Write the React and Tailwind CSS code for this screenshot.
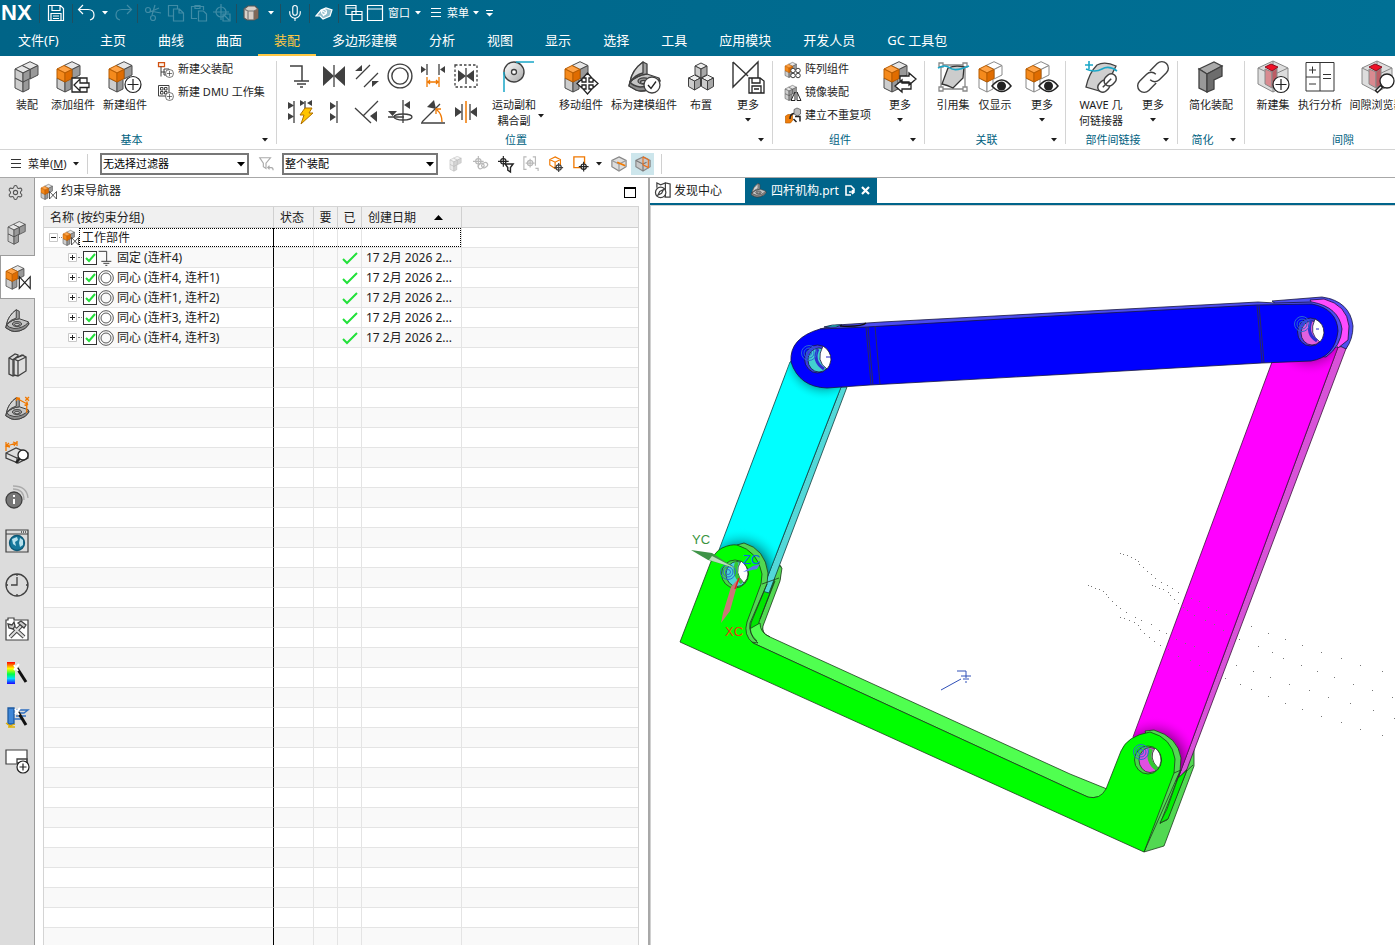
import React, { useState } from 'react';
import { Mic, Settings } from 'lucide-react';

const menuTabs = ['主页', '曲线', '曲面', '装配', '多边形建模', '分析', '视图', '显示', '选择', '工具', '应用模块', '开发人员', 'GC 工具包'];

const constraints = [
  { name: '固定 (连杆4)', fixed: true },
  { name: '同心 (连杆4, 连杆1)' },
  { name: '同心 (连杆1, 连杆2)' },
  { name: '同心 (连杆3, 连杆2)' },
  { name: '同心 (连杆4, 连杆3)' },
];

const cloudPoints = [
  [1120, 552], [1123, 553], [1127, 554], [1131, 556], [1135, 558], [1138, 560], [1139, 563], [1143, 566], [1147, 570], [1151, 573],
  [1155, 577], [1161, 581], [1167, 584], [1172, 587], [1178, 591], [1191, 597], [1199, 600], [1208, 606], [1216, 609], [1226, 613],
  [1088, 584], [1091, 585], [1095, 587], [1099, 588], [1103, 590], [1106, 593], [1108, 596], [1112, 600], [1116, 604], [1120, 607],
  [1126, 611], [1135, 616], [1141, 619], [1151, 623], [1159, 629], [1166, 632], [1176, 638], [1185, 642], [1194, 645], [1208, 651],
  [1152, 584], [1155, 585], [1159, 587], [1163, 588], [1168, 591], [1170, 594], [1174, 598], [1178, 602], [1183, 606], [1187, 609],
  [1194, 614], [1205, 619], [1214, 623], [1223, 629], [1239, 638], [1258, 645], [1272, 651], [1283, 657], [1301, 664], [1317, 670],
  [1120, 616], [1124, 617], [1129, 619], [1134, 621], [1138, 624], [1140, 628], [1144, 632], [1149, 636], [1154, 640], [1160, 644],
  [1168, 648], [1178, 655], [1190, 659], [1199, 664], [1207, 670], [1225, 677], [1240, 683], [1251, 688], [1268, 695], [1285, 702],
  [1251, 625], [1268, 632], [1285, 638], [1302, 644], [1321, 651], [1341, 657], [1360, 664], [1382, 670], [1236, 664], [1253, 670],
  [1270, 676], [1289, 683], [1309, 689], [1328, 696], [1350, 702], [1373, 709], [1392, 696], [1353, 683], [1334, 676], [1302, 708],
  [1321, 715], [1341, 721], [1360, 728], [1382, 734], [1394, 717], [1372, 689],
];

/* ---------- icons ---------- */

const Svg = ({ size = 32, box = 32, className = '', children }) => (
  <svg width={size} height={size} viewBox={`0 0 ${box} ${box}`} fill="none" stroke="#404040" strokeWidth="1.3" className={`shrink-0 overflow-visible ${className}`} aria-hidden="true">
    {children}
  </svg>
);

const Blocks = ({ hot, ghost, dim }) => {
  const t = ghost ? '#fff' : '#e6e6e6';
  const l = ghost ? '#fff' : '#cdcdcd';
  const r = ghost ? '#fff' : '#999';
  return (
    <g strokeWidth="1" stroke={ghost ? '#888' : '#4a4a4a'} strokeLinejoin="round" opacity={dim ? 0.4 : 1} transform={hot ? 'translate(-4 0)' : undefined}>
      <path d="M11 4.500 19 .7 27 4.500 19 8.500Z" fill={t} />
      <path d="M19 8.500 27 4.500V14L19 18Z" fill={r} />
      <path d="M4 17 12 21V31L4 27Z" fill={l} />
      <path d="M12 21 18 17V28L12 31Z" fill={r} />
      <path d="M4 8 11 4.500 19 8.500 12 12Z" fill={hot ? '#ffa347' : t} stroke={hot ? '#b85c00' : undefined} />
      <path d="M4 8 12 12V21L4 17Z" fill={hot ? '#f58a1c' : l} stroke={hot ? '#b85c00' : undefined} />
      <path d="M12 12 19 8.500V17.500L12 21Z" fill={hot ? '#e06c00' : r} stroke={hot ? '#b85c00' : undefined} />
    </g>
  );
};

const PlusBadge = ({ x = 24, y = 23.5, r = 8 }) => (
  <g stroke="#222" strokeWidth="1.2">
    <circle cx={x} cy={y} r={r} fill="#fff" />
    <path d={`M${x - r + 2.5} ${y}h${2 * r - 5}M${x} ${y - r + 2.5}v${2 * r - 5}`} />
  </g>
);

const Bowtie = ({ x = 17, y = 15, w = 14, h = 15 }) => (
  <path d={`M${x} ${y}v${h}l${w} ${-h}v${h}Z`} fill="#fff" stroke="#222" strokeWidth="1.5" />
);

const Bracket = ({ children, size }) => (
  <Svg size={size}>
    <g strokeLinejoin="round">
      <path d="M2 21Q9 14 19 13L31 17 32 20Q28 27 20 29 12 31 8 29L1 25Z" fill="#c4c4c4" />
      <path d="M1 25 2 21Q5 25 12 26 24 26 31 18L32 20Q28 27 20 29 12 31 8 29Z" fill="#8c8c8c" />
      <path d="M2 21Q4 9 15 1L19 3V13Q9 14 2 21Z" fill="#a0a0a0" />
      <path d="M2 21Q4 9 15 1V12Q7 14 2 21Z" fill="#d4d4d4" />
      <ellipse cx="16" cy="20" rx="6" ry="3.200" fill="#9a9a9a" />
      <ellipse cx="16" cy="21" rx="3.500" ry="1.500" fill="#eee" />
    </g>
    {children}
  </Svg>
);

const AssemblyIcon = ({ size }) => <Svg size={size}><Blocks /></Svg>;
const ConstraintNavIcon = ({ size }) => <Svg size={size}><Blocks hot /><Bowtie /></Svg>;
const AddIcon = () => (
  <Svg>
    <Blocks hot />
    <path d="M15 17H30V31H15Z" fill="#fff" stroke="#222" />
    <path d="M32 22H23V18L17 24 23 30V26.500H32Z" fill="#fff" stroke="#222" />
  </Svg>
);
const NewIcon = () => <Svg><Blocks hot /><PlusBadge /></Svg>;
const MoveIcon = () => (
  <Svg>
    <Blocks hot />
    <path d="M22.500 12l4.500 5h-3v4h4v-3l5 4.500-5 4.500v-3h-4v4h3l-4.500 5-4.500-5h3v-4h-4v3l-5-4.500 5-4.500v3h4v-4h-3Z" fill="#fff" stroke="#222" />
  </Svg>
);
const SwapIcon = () => (
  <Svg>
    <Blocks hot />
    <path d="M16 15h9v-3l7 6-7 6v-3h-9ZM27 22h-9v-3l-7 6 7 6v-3h9Z" fill="#fff" stroke="#222" />
  </Svg>
);
const EyeIcon = () => (
  <Svg>
    <Blocks hot ghost />
    <path d="M13 25Q23 13 32 25 23 36 13 25Z" fill="#fff" stroke="#222" strokeWidth="1.5" />
    <circle cx="22.500" cy="25" r="4.500" fill="#222" stroke="none" />
  </Svg>
);
const MarkIcon = () => (
  <Bracket>
    <circle cx="24" cy="24" r="8" fill="#fff" />
    <path d="M20 24l3 3.500 5-7" stroke="#222" />
  </Bracket>
);
const ArrangeIcon = () => (
  <Svg>
    {[[16, 2], [9.5, 14], [22.5, 14]].map(([x, y]) => (
      <g key={x} strokeWidth="1" strokeLinejoin="round">
        <path d={`M${x} ${y}l6 3-6 3-6-3Z`} fill="#eee" />
        <path d={`M${x - 6} ${y + 3}l6 3v9l-6-3.500Z`} fill="#ccc" />
        <path d={`M${x + 6} ${y + 3}l-6 3v9l6-3.500Z`} fill="#a8a8a8" />
      </g>
    ))}
  </Svg>
);
const SaveBowIcon = () => (
  <Svg>
    <path d="M1 1v25L26 1v16M1 1l15 14" stroke="#333" strokeWidth="1.4" />
    <path d="M17 17h11l4 3v12H17Z" fill="#fff" stroke="#222" />
    <path d="M20 17v5h8v-5M20 32v-7h9v7M22 28h5" stroke="#222" />
  </Svg>
);
const JointIcon = () => (
  <Svg>
    <defs><linearGradient id="wheel" x1="0" y1="0" x2="1" y2="1"><stop offset="0" stopColor="#fff" /><stop offset="1" stopColor="#a8a8a8" /></linearGradient></defs>
    <circle cx="16" cy="11" r="10" fill="url(#wheel)" strokeWidth="1.4" />
    <circle cx="16" cy="11" r="2.500" fill="#fff" />
    <path d="M18 1h18M6 11v20" stroke="#1aa7c8" strokeWidth="1.5" />
  </Svg>
);
const RefSetIcon = () => (
  <Svg>
    <path d="M4 4H28V28H4Z" stroke="#888" />
    <path d="M2 2h4v4H2ZM26 2h4v4h-4ZM2 26h4v4H2ZM26 26h4v4h-4Z" stroke="#888" fill="#fff" />
    <path d="M11 7Q18 4 27 6L26 17 16 27Q10 24 5 23 8 15 11 7Z" fill="#ccc" stroke="#333" />
    <path d="M1 7Q8 3 13 7T32 5" stroke="#1aa7c8" strokeWidth="1.6" />
  </Svg>
);
const WaveIcon = () => (
  <Svg>
    <path d="M12 4Q20 0 31 5L18 31 1 26Q4 12 12 4Z" fill="#cfcfcf" />
    <path d="M1 8Q10 12 17 8T32 10M4 0v8M0 4h8" stroke="#1aa7c8" strokeWidth="1.6" />
    <g transform="rotate(-45 22 22)" fill="#fff" strokeWidth="1.5"><rect x="11" y="17" width="13" height="10" rx="5" /><rect x="20" y="17" width="13" height="10" rx="5" /><path d="M16 22h12" /></g>
  </Svg>
);
const ChainIcon = () => (
  <Svg>
    <g transform="rotate(-45 16 16)" strokeWidth="1.4">
      <path d="M14 22.500H3.500a6.500 6.500 0 0 1 0-13H13.500a6.500 6.500 0 0 1 6.500 6.500" />
      <path d="M18 9.500H28.500a6.500 6.500 0 0 1 0 13H18.500a6.500 6.500 0 0 1-6.500-6.500" />
    </g>
  </Svg>
);
const SimplifyIcon = () => (
  <Svg>
    <path d="M4 8 19 1 27 5 12 13Z" fill="#aaa" />
    <path d="M4 8 12 13V31L4 27Z" fill="#999" />
    <path d="M12 13 27 5V15L19 19V28L12 31Z" fill="#6d6d6d" />
  </Svg>
);
const ClearanceCube = () => (
  <g strokeWidth="1" stroke="#888" strokeLinejoin="round">
    <path d="M16 0 31 7V23L16 31 1 23V7Z" fill="#ddd" />
    <path d="M16 14V31M1 7l15 7 15-7M16 0v12" />
    <path d="M8 8 15 11V27L8 23Z" fill="#d98a90" />
    <path d="M15 11 20 7V24L15 27Z" fill="#bd5c64" />
    <path d="M8 6 14 3 21 6 15 10Z" fill="#f01228" stroke="#8a1020" />
  </g>
);
const NewSetIcon = () => <Svg><ClearanceCube /><PlusBadge /></Svg>;
const AnalyzeIcon = () => (
  <Svg>
    <path d="M2 1.500H30V30H2ZM16 1.500V30M2 16H16M5 9h7M8.500 5.500v7M5 23h7M19 13.500h8M19 17.500h8" stroke="#333" strokeWidth="1" />
  </Svg>
);
const BrowseIcon = () => (
  <Svg>
    <ClearanceCube />
    <path d="M21 25l-6 6" stroke="#222" strokeWidth="4" />
    <path d="M20 26l-4 4" stroke="#fff" strokeWidth="1.500" />
    <circle cx="26" cy="20" r="7" fill="#fff" stroke="#222" />
  </Svg>
);

const Concentric = ({ size = 16 }) => (
  <Svg size={size} box={24}><circle cx="12" cy="12" r="11" /><circle cx="12" cy="12" r="7.500" /></Svg>
);
const Ground = ({ size = 16 }) => (
  <Svg size={size} box={24}><path d="M1 2h12v15M5 17h15M8 20h9M11 23h3" strokeWidth="1.5" /></Svg>
);

const constraintTools = [
  ['固定', <Ground key="i" size={24} />],
  ['接触', <Svg key="i" size={24} box={24}><path d="M1 2v20l11-10zM23 2v20L12 12z" fill="#404040" stroke="none" /><path d="M12 1v22" /></Svg>],
  ['平行', <Svg key="i" size={24} box={24}><path d="M1 15 15 1M9 23 23 9" /><path d="M0 7 7 1v6zM17 17h7l-7 6z" fill="#404040" stroke="none" /></Svg>],
  ['同心', <Concentric key="i" size={26} />],
  ['距离', <Svg key="i" size={24} box={24}><path d="M6 0v11M18 0v11" /><path d="M0 2v7l5-3.500zM24 2v7l-5-3.500z" fill="#404040" stroke="none" /><path d="M6 13v10M18 13v10M7 18h10M9 16l-2 2 2 2M15 16l2 2-2 2" stroke="#f07800" /></Svg>],
  ['胶合', <Svg key="i" size={24} box={24}><path d="M1 1h22v22H1z" strokeDasharray="2.500 2" /><path d="M4 6v12l8-6zM20 6v12l-8-6z" fill="#404040" stroke="none" /><path d="M12 4v16" /></Svg>],
  ['自动约束', <Svg key="i" size={26} box={26}><path d="M6 2v22M17 2v9" /><path d="M0 3v7l6-3.500zM0 14v7l6-3.500zM12 1v6l5-3zM24 1v6l-5-3z" fill="#404040" stroke="none" /><path d="M17 9h7l-3 5h4L13 25l3-9h-4z" fill="#ffc400" stroke="#b07000" strokeWidth="1" /></Svg>],
  ['对齐', <Svg key="i" size={24} box={24}><path d="M15 1v22" /><path d="M8 2v8l6-4zM8 13v8l6-4z" fill="#404040" stroke="none" /></Svg>],
  ['垂直', <Svg key="i" size={24} box={24}><path d="M23 1 8 16M0 8l16 15" /><path d="M22 11v11l-7-6z" fill="#404040" stroke="none" /></Svg>],
  ['中心', <Svg key="i" size={26} box={26}><path d="M16 1v23M1 18h16" /><ellipse cx="16" cy="18" rx="9" ry="3" /><path d="M1 12h9l-4.500 5zM23 2v8l-6-4z" fill="#404040" stroke="none" /></Svg>],
  ['角度', <Svg key="i" size={24} box={24}><path d="M0 23h24M1 22 19 4" /><path d="M6 7 13 0l2 9z" fill="#404040" stroke="none" /><path d="M21 22q0-8-5-12M15 14v-5h5" stroke="#f07800" /></Svg>],
  ['对中', <Svg key="i" size={24} box={24}><path d="M12 1v22" stroke="#f07800" strokeWidth="1.500" /><path d="M8 4v16M16 4v16" /><path d="M1 7v10l7-5zM23 7v10l-7-5z" fill="#404040" stroke="none" /></Svg>],
];

const Caret = ({ className = '' }) => (
  <svg width="6" height="4" viewBox="0 0 6 4" className={`shrink-0 ${className}`} fill="currentColor" aria-hidden="true"><path d="M0 0h6L3 3.500z" /></svg>
);

/* ---------- title bar ---------- */

const Sep = () => <span className="h-[19px] w-px bg-[#1f4f60]" />;

const QuickButton = ({ label, className = 'w-7', faded, children }) => (
  <button aria-label={label} className={`flex h-6 shrink-0 items-center justify-center ${className} ${faded ? 'opacity-25' : ''}`}>
    <svg width="18" height="18" viewBox="0 0 18 18" fill="none" stroke="#fff" strokeWidth="1.2" aria-hidden="true">{children}</svg>
  </button>
);

const TitleBar = () => (
  <div className="flex h-[26px] items-center text-[11px] text-white">
    <span className="w-[39px] pl-px font-[Liberation_Sans] text-[22px] leading-6 font-bold">NX</span>
    <Sep />
    <QuickButton label="保存" className="w-8"><path d="M1.500 1.500h12l3 3v12h-15zM5 1.500v5h8v-5M4 16.500v-7h10v7M6 12h6M6 14.500h6" /></QuickButton>
    <Sep />
    <QuickButton label="撤销" className="w-[26px]"><path d="M6 1 1.500 5.500 6 10M2 5.500h9q6 0 6 5.500 0 4-4 5" /></QuickButton>
    <Caret className="mx-[3px]" />
    <QuickButton label="重做" className="w-[26px]" faded><path d="M12 1l4.500 4.500L12 10M16 5.500H7q-6 0-6 5.500 0 4 4 5" /></QuickButton>
    <Sep />
    <div className="flex px-[3px]">
      <QuickButton label="剪切" className="w-[23px]" faded><circle cx="4" cy="6" r="2.500" /><circle cx="9" cy="14" r="2.500" /><path d="M6 7l11 2M8 11 11 1M6 8l9-4" /></QuickButton>
      <QuickButton label="复制" className="w-[23px]" faded><path d="M6 12H1.500V1.500h9V5M6.500 5h6l4 4v8h-10zM12 5v4h4" /></QuickButton>
      <QuickButton label="粘贴" className="w-[23px]" faded><path d="M7 14.500H1.500v-12h12V6M5 1.500h5v3H5zM8.500 7h5l3 3v7h-8z" /></QuickButton>
      <QuickButton label="定位" className="w-[23px]" faded><circle cx="8" cy="8" r="5" /><path d="M8 0v16M0 8h16M10 10h7v7h-7zM11 11l5 5" /></QuickButton>
    </div>
    <Sep />
    <QuickButton label="实体"><path d="M2 5 6 2h7l3 3v9l-4 2H5l-3-2z" fill="#d8d0c8" stroke="#555" /><path d="M2 5l4 2h6l4-2M6 7v9M12 7v9" stroke="#777" /><path d="M12 7l4-2v9l-4 2z" fill="#806858" stroke="none" /></QuickButton>
    <Caret className="mx-[3px]" />
    <span className="w-[3px]" />
    <Sep />
    <button aria-label="语音" className="flex w-7 justify-center"><Mic size={18} strokeWidth={1.5} /></button>
    <Sep />
    <QuickButton label="触控"><path d="M1 12 6 6l5-2 6 2-2 6-7 3-3-3zM6 6l5 3-3 3" fill="#ffffff90" /><circle cx="9" cy="8" r="2.500" /></QuickButton>
    <Sep />
    <div className="flex items-center pl-[3px]">
      <QuickButton label="层叠窗口" className="w-[23px]"><path d="M1 1.500h10v9H1zM1 4h10M7 7.500h10v9H7zM7 10.500h10" fill="#006487" /></QuickButton>
      <button className="flex items-center gap-[3px]">
        <svg width="20" height="18" viewBox="0 0 20 18" fill="none" stroke="#fff" strokeWidth="1.2"><path d="M2.500 1.500h15v15h-15zM2.500 5h15" /></svg>
        窗口<Caret className="ml-[2px]" />
      </button>
      <button className="ml-[9px] flex items-center gap-1">
        <svg width="12" height="10" viewBox="0 0 12 10" stroke="#fff" className="mr-px"><path d="M1 .5h10M1 4.500h10M1 8.500h10" /></svg>
        菜单<Caret />
      </button>
      <button aria-label="自定义" className="ml-[7px]">
        <svg width="7" height="7" viewBox="0 0 7 7" fill="#fff"><path d="M0 0h7v1H0zM0 3h7L3.500 6.500z" /></svg>
      </button>
    </div>
  </div>
);

const MenuTabs = ({ active, onSelect }) => (
  <nav className="flex h-[30px] text-[13px] text-white">
    <button className="w-[84px] shrink-0 pl-[18px] text-left">文件(F)</button>
    {menuTabs.map((tab) => (
      <button
        key={tab}
        onClick={() => onSelect(tab)}
        className={`shrink-0 border-b-2 px-4 leading-none ${tab === active ? 'border-b-[#ffc845] text-[#ffc845]' : 'border-b-transparent'}`}
      >
        {tab}
      </button>
    ))}
  </nav>
);

/* ---------- ribbon ---------- */

const BigButton = ({ icon, lines, className, menu }) => (
  <button className={`flex shrink-0 flex-col items-center pt-[5px] leading-4 whitespace-nowrap ${className}`}>
    {icon}
    <span className="mt-1">{lines[0]}</span>
    {lines[1] && <span>{lines[1]}</span>}
    {menu && <Caret className="mt-[5px]" />}
  </button>
);

const SmallButton = ({ icon, label }) => (
  <button className="flex h-[23px] items-center gap-1 text-left whitespace-nowrap">{icon}{label}</button>
);

const RibbonGroup = ({ title, menu = true, className, children }) => (
  <section className={`my-[5px] flex shrink-0 flex-col border-r border-[#d4d4d4] ${className}`}>
    <div className="-mt-[5px] flex min-h-0 flex-1">{children}</div>
    <div className="-mb-1 flex h-4 items-center">
      <h2 className="flex-1 text-center leading-4 text-[#00627f]">{title}</h2>
      <span className="w-[17px]">{menu && <Caret className="ml-[3px]" />}</span>
    </div>
  </section>
);

const Ribbon = () => (
  <div className="flex h-[94px] shrink-0 overflow-hidden border-b border-[#d4d4d4] bg-white text-[11px]">
    <RibbonGroup title="基本" className="w-[277px] pl-1">
      <BigButton icon={<AssemblyIcon />} lines={['装配']} className="w-[46px]" />
      <BigButton icon={<AddIcon />} lines={['添加组件']} className="w-[46px]" />
      <BigButton icon={<NewIcon />} lines={['新建组件']} className="w-[58px]" />
      <div className="ml-1 flex flex-col pt-[2px]">
        <SmallButton label="新建父装配" icon={<Svg size={16}><path d="M1 1h12v8H1z" stroke="#d05010" strokeWidth="2.500" fill="#fff3e8" /><path d="M6 9v20M6 20h9M12 14h10v12H12z" strokeWidth="2" /><PlusBadge x={23} y={23} /></Svg>} />
        <SmallButton label="新建 DMU 工作集" icon={<Svg size={16}><path d="M1 1h21v21H1zM5 5h5v5H5zM13 5h5v5h-5zM5 13h5v5H5zM13 13h5v5h-5z" strokeWidth="2" /><PlusBadge x={23} y={23} /></Svg>} />
      </div>
    </RibbonGroup>

    <RibbonGroup title="位置" className="w-[496px]">
      <div className="ml-[7px] grid shrink-0 grid-cols-6 grid-rows-[36px_36px] pt-[2px]">
        {constraintTools.map(([name, icon]) => (
          <button key={name} aria-label={name} title={name} className="flex w-[33px] items-center justify-center">{icon}</button>
        ))}
      </div>
      <BigButton icon={<JointIcon />} lines={['运动副和', '耦合副']} className="ml-[6px] w-[52px]" />
      <Caret className="-ml-[2px] mt-[58px]" />
      <BigButton icon={<MoveIcon />} lines={['移动组件']} className="ml-[11px] w-[52px]" />
      <BigButton icon={<MarkIcon />} lines={['标为建模组件']} className="w-[74px]" />
      <BigButton icon={<ArrangeIcon />} lines={['布置']} className="w-10" />
      <BigButton icon={<SaveBowIcon />} lines={['更多']} menu className="ml-1 w-[46px]" />
    </RibbonGroup>

    <RibbonGroup title="组件" className="w-[152px]">
      <div className="ml-3 flex w-[92px] flex-col pt-[2px]">
        <SmallButton label="阵列组件" icon={<Svg size={16}><Blocks hot /><g fill="#fff" strokeWidth="2"><circle cx="16" cy="17" r="4.500" /><circle cx="26" cy="17" r="4.500" /><circle cx="16" cy="27" r="4.500" /><circle cx="26" cy="27" r="4.500" /></g></Svg>} />
        <SmallButton label="镜像装配" icon={<Svg size={16}><g transform="translate(-4 0)"><Blocks /></g><path d="M20 31V14l-8 17zM24 31V14l8 17z" fill="#fff" stroke="#222" strokeWidth="2" /></Svg>} />
        <SmallButton label="建立不重复项" icon={<Svg size={16}><path d="M1 16l5-3h9v12l-4 5H1z" fill="#ef7d0b" stroke="#b85c00" /><path d="M18 3l6-3 7 3v9l-6 4-7-4z" fill="#bbb" /><path d="M10 22q0-10 8-11M17 22l6 6M20 17h10v10" stroke="#222" strokeWidth="3" /></Svg>} />
      </div>
      <BigButton icon={<SwapIcon />} lines={['更多']} menu className="w-12" />
    </RibbonGroup>

    <RibbonGroup title="关联" className="w-[141px]">
      <BigButton icon={<RefSetIcon />} lines={['引用集']} className="ml-2 w-10" />
      <BigButton icon={<EyeIcon />} lines={['仅显示']} className="w-11" />
      <BigButton icon={<EyeIcon />} lines={['更多']} menu className="ml-1 w-[42px]" />
    </RibbonGroup>

    <RibbonGroup title="部件间链接" className="w-[112px]">
      <BigButton icon={<WaveIcon />} lines={['WAVE 几', '何链接器']} className="ml-2 w-[54px]" />
      <BigButton icon={<ChainIcon />} lines={['更多']} menu className="ml-1 w-[42px]" />
    </RibbonGroup>

    <RibbonGroup title="简化" className="w-[67px]">
      <BigButton icon={<SimplifyIcon />} lines={['简化装配']} className="w-full" />
    </RibbonGroup>

    <RibbonGroup title="间隙" className="w-[214px]" menu={false}>
      <BigButton icon={<NewSetIcon />} lines={['新建集']} className="ml-[6px] w-11" />
      <BigButton icon={<AnalyzeIcon />} lines={['执行分析']} className="w-[50px]" />
      <BigButton icon={<BrowseIcon />} lines={['间隙浏览器']} className="w-16" />
    </RibbonGroup>
  </div>
);

/* ---------- selection bar ---------- */

const FilterSelect = ({ label, value, className }) => (
  <div className={`grid h-[22px] items-center border-2 border-[#777] ${className}`}>
    <select aria-label={label} defaultValue={value} className="col-start-1 row-start-1 h-full w-full appearance-none bg-white px-px text-[11px] text-black">
      <option>{value}</option>
    </select>
    <svg width="8" height="5" viewBox="0 0 8 5" className="pointer-events-none col-start-1 row-start-1 mr-[2px] justify-self-end"><path d="M0 0h8L4 4.500z" /></svg>
  </div>
);

const ToolButton = ({ label, active, children }) => (
  <button aria-label={label} className={`flex h-[22px] shrink-0 items-center justify-center ${active ? 'w-[23px] bg-[#cde6ec]' : 'w-[25px]'}`}>
    <Svg size={16} box={18}>{children}</Svg>
  </button>
);

const SelectionBar = () => (
  <div className="flex h-7 shrink-0 items-center border-b border-[#a8a8a8] bg-white pt-px text-[11px]">
    <button className="ml-[11px] flex w-[76px] items-center">
      <svg width="10" height="10" viewBox="0 0 10 10" stroke="#333"><path d="M0 .5h10M0 4.500h10M0 8.500h10" /></svg>
      <span className="ml-[7px]">菜单(<u>M</u>)</span>
      <Caret className="ml-[6px]" />
    </button>
    <span className="h-5 w-px bg-[#d0d0d0]" />
    <FilterSelect label="选择过滤器" value="无选择过滤器" className="ml-3 w-[149px]" />
    <div className="mx-1 flex">
      <ToolButton label="重置过滤器"><path d="M2 2h12l-5 6v6l-3-2V8zM11 13h4q2 0 2 3M13 11l-2 2 2 2" stroke="#aaa" /></ToolButton>
    </div>
    <FilterSelect label="选择范围" value="整个装配" className="w-[156px]" />
    <div className="ml-[5px] flex items-center">
      <ToolButton label="实体"><g transform="scale(.55)"><Blocks dim /></g></ToolButton>
      <ToolButton label="链接"><g stroke="#b8b8b8"><circle cx="6" cy="6" r="3" /><path d="M6 0v12M0 6h12" /><rect x="6" y="9" width="7" height="5" rx="2.500" transform="rotate(-35 9 12)" /><rect x="10" y="8" width="7" height="5" rx="2.500" transform="rotate(-35 13 11)" /></g></ToolButton>
      <ToolButton label="点过滤"><path d="M6 0v12M0 6h12" stroke="#222" /><circle cx="6" cy="6" r="3" stroke="#222" /><path d="M8 9h9l-3 4v5l-3-2v-3z" fill="#fff" stroke="#222" strokeWidth="1.600" /></ToolButton>
      <ToolButton label="范围"><path d="M4 1H1v14h3M11 1h3v10M8 3v10M3 8h10M14 14h3v3" stroke="#b8b8b8" /><circle cx="8" cy="8" r="3" stroke="#b8b8b8" /></ToolButton>
      <ToolButton label="实体点"><path d="M8 1l6 3v6l-6 4-6-4V4zM2 4l6 3 6-3M8 7v6" stroke="#f07800" /><circle cx="12" cy="13" r="3" fill="#fff" /><path d="M12 8v10M7 13h10" /></ToolButton>
      <ToolButton label="框选点"><path d="M1 1h12v12H1z" stroke="#f07800" strokeWidth="1.500" /><circle cx="12" cy="12" r="3" fill="#fff" stroke="#222" /><path d="M12 6.500v11M6.500 12h11" stroke="#222" /></ToolButton>
      <Caret className="mx-[3px]" />
      <div className="ml-px flex">
        <ToolButton label="着色"><path d="M9 1l8 4v7l-8 5-8-5V5z" fill="#ddd" stroke="#888" /><path d="M1 5l8 4 8-4M9 9v8" stroke="#999" /><path d="M7 7l9 4" stroke="#f07800" strokeWidth="2" /></ToolButton>
        <ToolButton label="线框" active><path d="M9 1l8 4v7l-8 5-8-5V5z" fill="#c8c8c8" stroke="#888" /><path d="M1 5l8 4V17M9 9l4-2" stroke="#777" /><path d="M9 1v9M9 1l6 3v9L9 10" stroke="#e87020" /></ToolButton>
      </div>
      <span className="ml-[7px] h-5 w-px bg-[#d0d0d0]" />
    </div>
  </div>
);

/* ---------- resource bar ---------- */

const sideItems = [
  ['装配导航器', <AssemblyIcon key="i" size={24} />],
  ['约束导航器', <ConstraintNavIcon key="i" size={25} />],
  ['部件导航器', <Bracket key="i" size={24} />],
  ['重用库', <Svg key="i" size={24} box={24}><path d="M4 5 10 1l3 1v19l-5 2-4-2z" fill="#d8d8d8" /><path d="M4 5l4 2v16M8 7l5-4" /><path d="M9 6 17 2l4 2v14l-8 5-4-1z" fill="#dedede" /><path d="M9 6l4 2v15M13 8l8-4M11 5l8-3" /></Svg>],
  ['PMI 导航器', <Bracket key="i" size={24}><path d="M16 2l13 7M29 9v12M27 0l5 5M32 0l-5 5M15 5l1-4 4 1M26 11l4-1-1-4" stroke="#f07800" strokeWidth="1.800" /></Bracket>],
  ['测量', <Svg key="i" size={24} box={24}><path d="M1 12 11 7l12 5v5l-10 5L1 17zM1 12l11 5 10-4M12 17v5" fill="#ddd" /><path d="M1 1v9M12 0v5M2 5l9-3M4 2 1 5l4 1M8 1l3 1-2 3" stroke="#f07800" /><path d="M15 17l-4 5" strokeWidth="2.500" stroke="#222" /><circle cx="18" cy="14" r="5" fill="#fff" stroke="#222" /></Svg>],
  ['信息', <Svg key="i" size={24} box={24}><circle cx="9" cy="15" r="8" fill="#777" /><path d="M9 14v5M9 10v2" stroke="#fff" strokeWidth="2" /><path d="M8 4q11 0 11 11M8 1q14 0 15 12" stroke="#aaa" /></Svg>],
  ['浏览器', <Svg key="i" size={24} box={24}><path d="M1 1h22v22H1zM1 5h22" strokeWidth="1.200" /><path d="M16 3h1M18 3h1M20 3h1" /><circle cx="12" cy="14" r="7.500" fill="#17789c" stroke="#0d5876" /><path d="M7 10l5-2 1 3-3 2 1 4-3-2zM15 9l3 2v5l-3 2-1-4z" fill="#b9e2ee" stroke="none" /></Svg>],
  ['历史记录', <Svg key="i" size={24} box={24}><circle cx="12" cy="12" r="11" /><path d="M12 4v8H6M12 1v2M12 21v2M1 12h2M21 12h2" /></Svg>],
  ['加工向导', <Svg key="i" size={24} box={24}><path d="M1 23V3h2V1h6v2h14v20z" fill="#fff" strokeWidth="1.200" /><path d="M5 20 17 8M7 9l12 11" stroke="#444" strokeWidth="4" /><path d="M5 20 17 8M7 9l12 11" stroke="#ddd" strokeWidth="2" /><path d="M3 7l1 4 4 1 2-3-1-4-2 3zM13 6l3-2 5 4-2 3z" fill="#ccc" /></Svg>],
  ['角色', (
    <Svg key="i" size={24} box={24}>
      <defs><linearGradient id="rainbow" x1="0" y1="0" x2="0" y2="1"><stop offset="0" stopColor="#f00" /><stop offset=".3" stopColor="#ff0" /><stop offset=".55" stopColor="#0f4" /><stop offset=".75" stopColor="#0df" /><stop offset="1" stopColor="#20f" /></linearGradient></defs>
      <path d="M2 1h8v22H2z" fill="url(#rainbow)" stroke="none" />
      <path d="M12 7l9 14" stroke="#111" strokeWidth="3" /><path d="M9 4l4 6M14 3l-5 6" stroke="#fff" strokeWidth="2" />
    </Svg>
  )],
  ['系统可视化', <Svg key="i" size={24} box={24}><path d="M3 3h6v16H3z" fill="#3d86d8" stroke="#1e5aa0" /><path d="M9 5h14l-4 3H9M11 11h10M9 14h9" stroke="#2f6fc0" /><path d="M1 18l4 3 5-2M3 22h7" stroke="#e0b000" /><path d="M13 7l8 13" stroke="#111" strokeWidth="3" /><path d="M10 4l4 6M15 3l-5 6" stroke="#fff" strokeWidth="2" /></Svg>],
  ['新建选项板', <Svg key="i" size={24} box={24}><path d="M1 1h21v14H1z" fill="#fff" strokeWidth="1.200" /><path d="M12 14h10v-4H12z" /><PlusBadge x={18} y={18} r={6} /></Svg>],
];

const ResourceBar = () => (
  <aside className="flex w-[35px] shrink-0 flex-col border-r border-[#9c9c9c] bg-[#dcdcdc]">
    <button aria-label="设置" className="flex h-[33px] shrink-0 items-center justify-center pr-1 pb-1"><Settings size={17} strokeWidth={1.5} color="#555" /></button>
    {sideItems.map(([name, icon]) => (
      <button
        key={name}
        aria-label={name}
        title={name}
        className={`flex h-11 shrink-0 items-center justify-center ${name === '约束导航器' ? '-mr-px border border-r-0 border-[#9c9c9c] bg-white' : ''}`}
      >
        {icon}
      </button>
    ))}
  </aside>
);

/* ---------- constraint navigator ---------- */

const Tick = () => (
  <svg width="16" height="14" viewBox="0 0 16 14" fill="none" stroke="#22e03a" strokeWidth="2" className="mx-auto"><path d="M1 8l4 4L15 2" /></svg>
);

const Expander = ({ open }) => (
  <svg width="9" height="9" viewBox="0 0 9 9" fill="#fff" stroke="#c8c8c8" className="shrink-0">
    <path d="M.5 .5h8v8h-8z" /><path d={open ? 'M2 4.500h5' : 'M2 4.500h5M4.500 2v5'} stroke="#222" />
  </svg>
);

const cell = 'border-r border-b border-[#e4e4e4] p-0';

const ConstraintRow = ({ item }) => {
  const [checked, setChecked] = useState(true);
  return (
    <tr className="h-5 even:bg-[#f9f9f9]">
      <td className="border-r border-b border-r-black border-b-[#e4e4e4] p-0">
        <label className="flex items-center pl-6 leading-[19px]">
          <Expander />
          <span className="mr-px ml-px w-1 border-t border-dotted border-[#888]" />
          <span className="grid size-[14px] place-items-center border border-[#333] bg-white">
            <input type="checkbox" checked={checked} onChange={() => setChecked(!checked)} className="col-start-1 row-start-1 size-3 appearance-none" />
            {checked && <svg width="11" height="11" viewBox="0 0 11 11" fill="none" stroke="#22e03a" strokeWidth="2" className="pointer-events-none col-start-1 row-start-1"><path d="M1 6l3 3 6-7" /></svg>}
          </span>
          <span className="mr-[3px] ml-px">{item.fixed ? <Ground /> : <Concentric />}</span>
          {item.name}
        </label>
      </td>
      <td className={cell} />
      <td className={cell} />
      <td className={cell}><Tick /></td>
      <td className={`${cell} pl-1 whitespace-nowrap`}>17 2月 2026 2...</td>
      <td className="border-b border-[#e4e4e4] p-0" />
    </tr>
  );
};

const Navigator = () => (
  <section className="flex w-[613px] shrink-0 flex-col bg-white text-xs">
    <header className="flex h-[28px] shrink-0 items-center pl-[6px]">
      <ConstraintNavIcon size={16} />
      <h1 className="ml-1 -mt-[2px]">约束导航器</h1>
      <button aria-label="最大化" className="mr-3 ml-auto h-[11px] w-3 border border-t-2 border-black" />
    </header>
    <div className="mr-[9px] ml-2 min-h-0 flex-1 overflow-hidden border border-b-0 border-[#d4d4d4]">
      <table className="w-full table-fixed border-separate border-spacing-0 text-left leading-[19px] text-[#1c1c1c]">
        <colgroup>
          <col className="w-[230px]" /><col className="w-10" /><col className="w-6" /><col className="w-6" /><col className="w-[100px]" /><col />
        </colgroup>
        <thead>
          <tr className="h-[21px] bg-[#f0f0f0] *:border-r *:border-b *:border-[#d0d0d0] *:p-0 *:font-normal">
            <th className="pl-[6px]!">名称 (按约束分组)</th>
            <th className="pl-[6px]!">状态</th>
            <th className="text-center">要</th>
            <th className="text-center">已</th>
            <th className="pl-[6px]!">
              <span className="flex items-center gap-[18px]">
                创建日期
                <svg width="9" height="5" viewBox="0 0 9 5"><path d="M0 5h9L4.500 0z" /></svg>
              </span>
            </th>
            <th className="border-r-0!" />
          </tr>
        </thead>
        <tbody>
          <tr className="h-5">
            <td className="border-r border-b border-r-black border-b-[#e4e4e4] p-0">
              <div className="flex items-center pl-[5px]">
                <Expander open />
                <span className="mx-px w-[3px] border-t border-dotted border-[#888]" />
                <ConstraintNavIcon size={16} />
                <span className="h-[19px] flex-1 border border-r-0 border-dotted border-black pl-[2px] leading-[17px]">工作部件</span>
              </div>
            </td>
            {[1, 2, 3].map((n) => (
              <td key={n} className={cell}><div className="h-[19px] border-y border-dotted border-black" /></td>
            ))}
            <td className={cell}><div className="h-[19px] border border-l-0 border-dotted border-black" /></td>
            <td className="border-b border-[#e4e4e4] p-0" />
          </tr>
          {constraints.map((item) => <ConstraintRow key={item.name} item={item} />)}
          {Array.from({ length: 60 }, (_, i) => (
            <tr key={i} className="h-5 even:bg-[#f9f9f9]">
              <td className="border-r border-b border-r-black border-b-[#e4e4e4] p-0" />
              <td className={cell} />
              <td className={cell} />
              <td className={cell} />
              <td className={cell} />
              <td className="border-b border-[#e4e4e4] p-0" />
            </tr>
          ))}
        </tbody>
      </table>
    </div>
  </section>
);

/* ---------- graphics window ---------- */

const Rings = ({ x, y }) => (
  <g fill="none" stroke="#2a6ad0" strokeWidth="1"><circle cx={x} cy={y} r="7.500" /><circle cx={x} cy={y} r="5" /><circle cx={x} cy={y} r="2.500" /></g>
);

const Linkage = () => (
  <svg viewBox="651 205 744 739" preserveAspectRatio="xMinYMin meet" className="h-full w-full" strokeLinejoin="round" role="img" aria-label="四杆机构">
    <defs>
      <radialGradient id="shadeCyanTop" gradientUnits="userSpaceOnUse" cx="824" cy="356" r="44"><stop offset=".65" stopColor="#008a8a" stopOpacity=".8" /><stop offset="1" stopColor="#00ffff" stopOpacity="0" /></radialGradient>
      <radialGradient id="shadeCyanBottom" gradientUnits="userSpaceOnUse" cx="741" cy="573" r="46"><stop offset=".6" stopColor="#007070" stopOpacity=".7" /><stop offset="1" stopColor="#00ffff" stopOpacity="0" /></radialGradient>
      <radialGradient id="shadeMagentaTop" gradientUnits="userSpaceOnUse" cx="1310" cy="331" r="44"><stop offset=".6" stopColor="#8a008a" stopOpacity=".7" /><stop offset="1" stopColor="#ff00ff" stopOpacity="0" /></radialGradient>
      <radialGradient id="shadeMagentaBottom" gradientUnits="userSpaceOnUse" cx="1154" cy="761" r="46"><stop offset=".6" stopColor="#780078" stopOpacity=".7" /><stop offset="1" stopColor="#ff00ff" stopOpacity="0" /></radialGradient>
    </defs>

    {/* back ears of the frame */}
    <g stroke="#1c3d1c" strokeWidth=".8">
      <path d="M770 560 781 565 780 578 763 622Q760 632 770 636L753 642 746 625 762 580Z" fill="#00e600" />
      <path d="M776 562 782 567 780 580 763 625Q761 633 770 636L763 634Q757 630 759 621L774 581Z" fill="#52d852" />
      <path d="M1183 750 1194 748V765L1164 845 1144 851 1170 780Z" fill="#52d852" />
    </g>

    {/* left rocker */}
    <g stroke="#123c3c" strokeWidth=".8">
      <path d="M841 386 847 386 769 592 762 590Z" fill="#52d8d8" />
      <path d="M790 361 719 549 762 590 841 386 815 350Z" fill="#00ffff" />
      <path d="M790 361 719 549 762 590 841 386 815 350Z" fill="url(#shadeCyanTop)" stroke="none" />
      <path d="M790 361 719 549 762 590 841 386 815 350Z" fill="url(#shadeCyanBottom)" stroke="none" />
    </g>

    {/* right rocker */}
    <g stroke="#3c123c" strokeWidth=".8">
      <path d="M1338 346 1347 345 1187 768 1177 780Z" fill="#d852d8" />
      <path d="M1272 361 1133 736 1150 780 1177 780 1338 346Z" fill="#ff00ff" />
      <path d="M1272 361 1133 736 1150 780 1177 780 1338 346Z" fill="url(#shadeMagentaTop)" stroke="none" />
      <path d="M1272 361 1133 736 1150 780 1177 780 1338 346Z" fill="url(#shadeMagentaBottom)" stroke="none" />
    </g>

    {/* coupler */}
    <g stroke="#151540" strokeWidth=".8">
      <path d="M1272 300 1322 296Q1350 300 1353 325 1353 338 1346 348L1310 330Z" fill="#4f4ff0" />
      <path d="M1310 299 1324 298Q1347 304 1349 325L1348 339 1338 347Z" fill="#ff4cff" />
      <path d="M820 328 837 324 882 321 1070 311 1258 301 1275 302 1312 301Q1339 306 1342 328 1341 345 1326 356L1260 350 870 370Z" fill="#4b4bf0" />
      <path d="M824 326Q832 323 842 324L836 326Z" fill="#25dada" />
      <path d="M820 328 867 326 1070 314 1257 304 1312 303Q1337 308 1338 330 1335 356 1311 360L1262 362 1070 373 870 384 827 387Q799 386 791 361 789 337 820 328Z" fill="#0000ff" />
      <path d="M866 326 871 384M868 326 873 384M875 325 880 383M1257 304 1262 362M1259 304 1264 362" fill="none" stroke="#2a2a60" strokeWidth="1" />
      <path d="M840 325Q862 326 866 322" fill="none" stroke="#111" strokeWidth="1.500" />
    </g>
    <g stroke="#151540" strokeWidth=".8">
      <ellipse cx="817.500" cy="358" rx="13" ry="14" fill="#3c3ce0" />
      <ellipse cx="819" cy="359" rx="11" ry="12" fill="#42d0d0" />
      <path d="M823 345Q831 350 831 359 830 365 827 368 815 360 823 345Z" fill="#fff" />
      <path d="M818 348Q812 360 824 368" fill="none" stroke="#3030d0" strokeWidth="3" />
      <ellipse cx="1310.500" cy="331" rx="13" ry="14" fill="#3c3ce0" />
      <ellipse cx="1312" cy="332" rx="11" ry="12" fill="#e060e0" />
      <path d="M1315 318Q1324 322 1324 332 1323 338 1320 341 1308 333 1315 318Z" fill="#fff" />
      <path d="M1311 320Q1306 333 1317 340" fill="none" stroke="#3030d0" strokeWidth="3" />
    </g>
    <path d="M826 356h5M1316 328h3" stroke="#2222cc" />
    <Rings x={809} y={352} />
    <Rings x={1302} y={323} />

    {/* frame */}
    <g stroke="#1c3d1c" strokeWidth=".8">
      <path d="M753 642 746 630 760 622Q760 632 770 636L1070 773 1107 788 1104 795 1090 797 1070 788Z" fill="#50ff50" />
      <path d="M737 544 744 542Q765 548 768 572L767 583 751 622Q748 634 758 642L745 640 740 615 760 580Z" fill="#52d852" />
      <path d="M1145 730 1154 729Q1178 736 1181 757L1180 770 1144 851 1160 780Z" fill="#52d852" />
      <path d="M680 641 710 563Q714 551 722 547 731 543 737 544 758 550 762 573L761 583 747 621Q743 634 753 642L1070 788 1088 796Q1100 799 1106 788L1121 750Q1127 735 1150 731 1172 737 1175 758L1174 772 1144 851Z" fill="#00ff00" />
      <path d="M1174 772 1181 769 1160 823M1180 776 1193 764M1187 769 1167 819 1160 822" fill="none" />
      <path d="M1178 777 1187 769 1168 818 1160 822 1167 808Z" fill="#00f000" />
      <path d="M762 583 779 577M767 583 750 622Q748 632 757 640M775 580 760 618" fill="none" />
      <ellipse cx="735" cy="573" rx="13.500" ry="14" fill="#44d844" />
      <ellipse cx="737" cy="573" rx="11" ry="12.500" fill="#4dd6d6" />
      <path d="M741 560Q748 565 748 573 748 578 744 582 733 572 741 560Z" fill="#fff" />
      <path d="M737 561Q732 573 742 582" fill="none" stroke="#32c832" strokeWidth="3.500" />
      <ellipse cx="1148" cy="759" rx="13.500" ry="14" fill="#44d844" />
      <ellipse cx="1150" cy="759" rx="11" ry="12.500" fill="#e050e0" />
      <path d="M1155 747Q1161 751 1161 760 1160 766 1158 767 1148 757 1155 747Z" fill="#fff" />
      <path d="M1151 748Q1146 760 1157 768" fill="none" stroke="#32c832" strokeWidth="4" />
    </g>
    <Rings x={728} y={571} />
    <Rings x={1141} y={751} />

    {/* work coordinate system */}
    <path d="M691 549 712 552 735 567 708 559Z" fill="#3f9448" />
    <path d="M712 555 735 567 709 559Z" fill="#b9dfba" />
    <path d="M739 577 731 586 723 612 721 622 730 610Z" fill="#c87878" />
    <path d="M739 577 735 588" stroke="#e02020" strokeWidth="1.500" />
    <path d="M743 571 753 565 760 563 757 568Z" fill="#5c78e8" />
    <g fontFamily="Liberation Sans, sans-serif" fontSize="13">
      <text x="692" y="543" fill="#3a9440">YC</text>
      <text x="743" y="563" fill="#1060e8">ZC</text>
      <text x="725" y="635" fill="#e04010">XC</text>
    </g>

    <path d="M941 689 961 678M957 670h9v7M961 675h10M963 678h6M965 681h2" fill="none" stroke="#3050b8" />
    <g fill="#777">
      {cloudPoints.map(([x, y]) => <rect key={`${x}-${y}`} x={x} y={y} width="1" height="1" />)}
    </g>
  </svg>
);

const Viewport = () => (
  <main className="flex min-w-0 flex-1 flex-col border-l-2 border-[#a8a8a8] bg-white">
    <div role="tablist" className="flex h-[27px] shrink-0 items-stretch border-b-2 border-[#00648a] text-xs">
      <button role="tab" aria-selected="false" className="flex w-[95px] items-center pl-[5px]">
        <Svg size={17} box={18}><path d="M2 6V1l4 2 5-2v15M11 1l5 1v14h-6" /><circle cx="6" cy="11" r="5.500" fill="#fff" /><path d="M3 14l2-4 4-2-2 4z" /></Svg>
        <span className="ml-[2px]">发现中心</span>
      </button>
      <button role="tab" aria-selected="true" className="flex w-[132px] items-center bg-[#00648a] pl-[6px] text-white">
        <Bracket size={15} />
        <span className="ml-[5px]">四杆机构.prt</span>
        <svg width="10" height="11" viewBox="0 0 10 11" fill="none" stroke="#fff" strokeWidth="1.600" className="ml-[6px]"><path d="M6 10H1V1h5l3 3v2M4 7h5M7 5l2 2-2 2" /></svg>
        <svg width="9" height="9" viewBox="0 0 9 9" stroke="#fff" strokeWidth="2.200" className="ml-[6px]"><path d="M1 1l7 7M8 1 1 8" /></svg>
      </button>
    </div>
    <div className="min-h-0 flex-1 border-t border-l border-[#d0d0d0]">
      <Linkage />
    </div>
  </main>
);

const App = () => {
  const [activeTab, setActiveTab] = useState('装配');

  return (
    <div className="flex h-screen flex-col overflow-hidden bg-white font-['Noto_Sans','Noto_Sans_CJK_SC',sans-serif] text-[#1c1c1c]">
      <header className="shrink-0 bg-linear-to-r from-[#006487] to-[#007095]">
        <TitleBar />
        <MenuTabs active={activeTab} onSelect={setActiveTab} />
      </header>
      <Ribbon />
      <SelectionBar />
      <div className="flex min-h-0 flex-1">
        <ResourceBar />
        <Navigator />
        <Viewport />
      </div>
    </div>
  );
};

export default App;
